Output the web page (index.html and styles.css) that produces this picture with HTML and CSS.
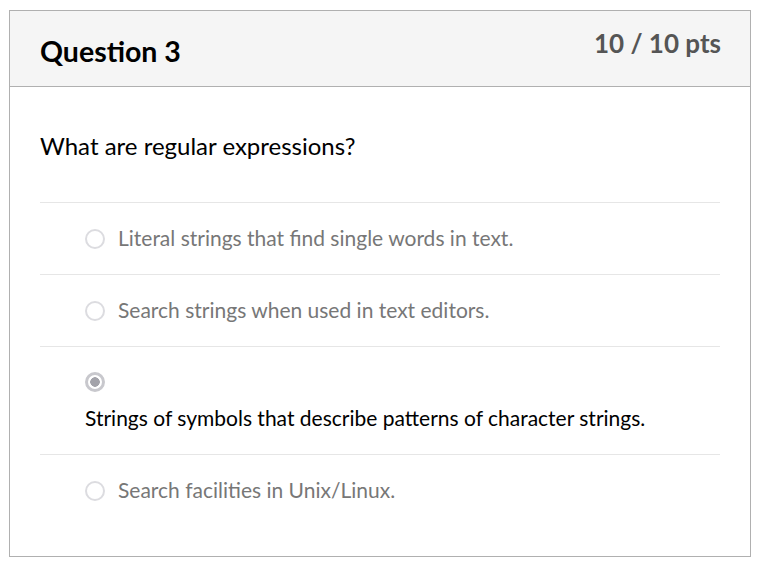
FILE: index.html
```html
<!DOCTYPE html>
<html>
<head>
<meta charset="utf-8">
<link rel="stylesheet" href="styles.css">
</head>
<body>
<div class="question">
  <div class="q-header">
    <h2 class="q-title">Question 3</h2>
    <div class="q-points">10 / 10 pts</div>
  </div>
  <div class="q-body">
    <p class="q-text">What are regular expressions?</p>
    <div class="answers">
      <div class="answer">
        <span class="radio"></span>
        <span class="a-text">Literal strings that find single words in text.</span>
      </div>
      <div class="answer">
        <span class="radio"></span>
        <span class="a-text">Search strings when used in text editors.</span>
      </div>
      <div class="answer selected">
        <span class="radio checked"></span>
        <span class="a-text">Strings of symbols that describe patterns of character strings.</span>
      </div>
      <div class="answer last">
        <span class="radio"></span>
        <span class="a-text">Search facilities in Unix/Linux.</span>
      </div>
    </div>
  </div>
</div>
</body>
</html>
```
FILE: styles.css
```css
* { box-sizing: border-box; }
body {
  margin: 0;
  background: #fff;
  font-family: Lato, "Open Sans", sans-serif;
  color: #000;
}
.question {
  margin: 10px 0 0 9px;
  width: 742px;
  height: 547px;
  border: 1px solid #b0b0b0;
}
.q-header {
  height: 76px;
  background: #f5f5f5;
  border-bottom: 1px solid #b0b0b0;
  display: flex;
  justify-content: space-between;
  padding: 0 29px 0 30px;
}
.q-title {
  margin: 0;
  font-size: 28.5px;
  font-weight: 700;
  line-height: 30px;
  padding-top: 25px;
}
.q-points {
  font-size: 26px;
  font-weight: 700;
  color: #555;
  line-height: 26px;
  padding-top: 19px;
}
.q-body {
  padding: 0 30px;
}
.q-text {
  margin: 0;
  font-size: 24px;
  line-height: 28px;
  padding-top: 45px;
  padding-bottom: 42px;
}
.answers {
  border-top: 1px solid #e6e6e6;
}
.answer {
  display: flex;
  align-items: center;
  height: 72px;
  padding-left: 45px;
  border-bottom: 1px solid #e6e6e6;
}
.answer.last {
  border-bottom: none;
}
.answer .a-text {
  margin-bottom: 2px;
}
.answer.selected {
  height: 108px;
  flex-direction: column;
  align-items: flex-start;
  justify-content: flex-start;
  padding-top: 25px;
}
.radio {
  width: 20px;
  height: 20px;
  border-radius: 50%;
  border: 2px solid #dcdce0;
  background: #fff;
  flex: none;
  margin-right: 13px;
}
.radio.checked {
  border: 3px solid #c8c8cd;
  background: radial-gradient(circle, #a3a3aa 0 4.5px, #fff 5px);
  margin-bottom: 14px;
}
.a-text {
  font-size: 21px;
  color: #777;
  line-height: 24px;
}
.selected .a-text {
  color: #000;
}
```
